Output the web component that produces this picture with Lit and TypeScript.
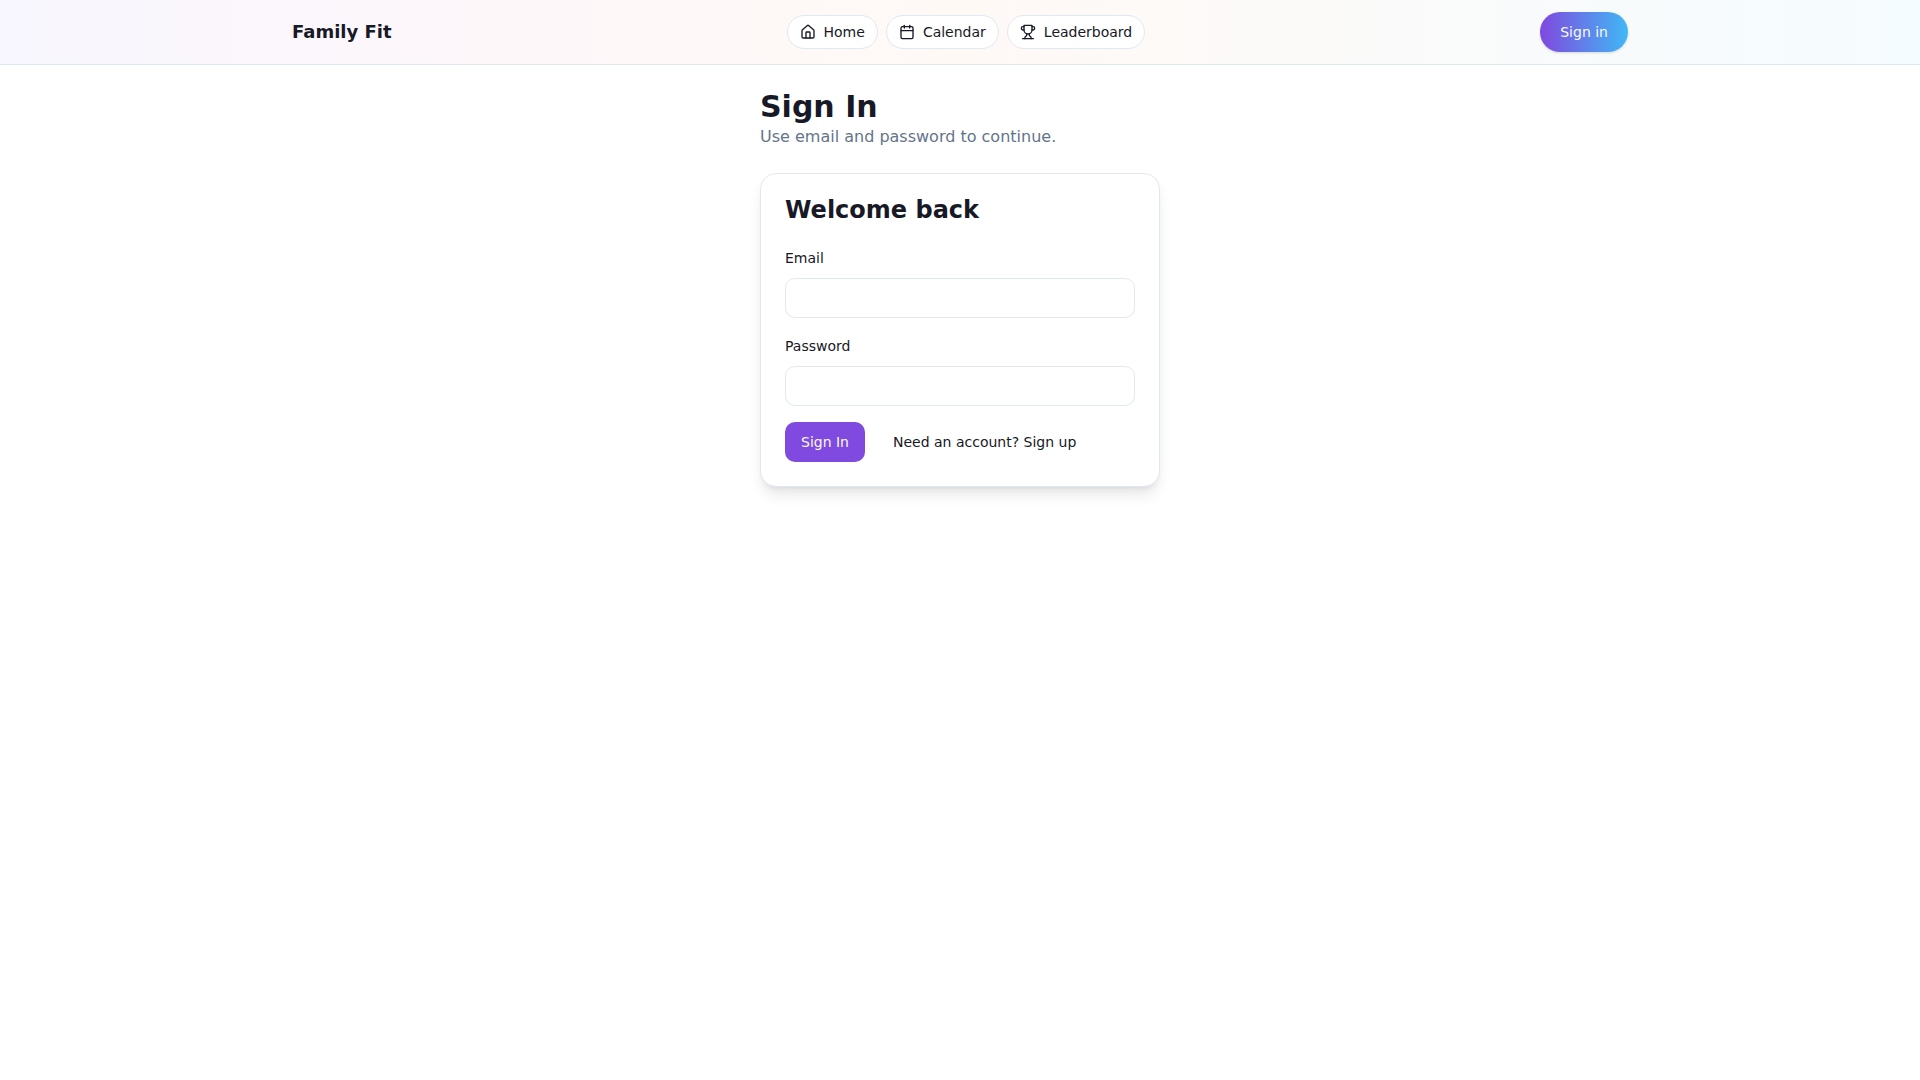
import { LitElement, html, css, svg } from "lit";
import { customElement } from "lit/decorators.js";

const icons = {
  home: svg`<path d="M15 21v-8a1 1 0 0 0-1-1h-4a1 1 0 0 0-1 1v8"/><path d="M3 10a2 2 0 0 1 .709-1.528l7-5.999a2 2 0 0 1 2.582 0l7 5.999A2 2 0 0 1 21 10v9a2 2 0 0 1-2 2H5a2 2 0 0 1-2-2z"/>`,
  calendar: svg`<path d="M8 2v4"/><path d="M16 2v4"/><rect width="18" height="18" x="3" y="4" rx="2"/><path d="M3 10h18"/>`,
  trophy: svg`<path d="M6 9H4.500a2.500 2.500 0 0 1 0-5H6"/><path d="M18 9h1.500a2.500 2.500 0 0 0 0-5H18"/><path d="M4 22h16"/><path d="M10 14.660V17c0 .550-.470.980-.970 1.210C7.850 18.750 7 20.240 7 22"/><path d="M14 14.660V17c0 .550.470.980.970 1.210C16.150 18.750 17 20.240 17 22"/><path d="M18 2H6v7a6 6 0 0 0 12 0V2Z"/>`,
};

const links = [
  { label: "Home", href: "#home", icon: icons.home },
  { label: "Calendar", href: "#calendar", icon: icons.calendar },
  { label: "Leaderboard", href: "#leaderboard", icon: icons.trophy },
];

@customElement("app-header")
class AppHeader extends LitElement {
  static styles = css`
    :host {
      display: block;
      border-bottom: 1px solid #dfe7f1;
      background: linear-gradient(to right, #f8f6fe, #fdf7fa 25%, #fff9f6 50%, #f5fcff);
    }
    .bar {
      box-sizing: border-box;
      max-width: 1400px;
      margin: 0 auto;
      padding: 12px 32px;
      display: flex;
      align-items: center;
      justify-content: space-between;
    }
    a {
      color: inherit;
      text-decoration: none;
    }
    .brand {
      font-size: 18px;
      line-height: 28px;
      font-weight: 700;
    }
    .nav {
      display: flex;
      gap: 8px;
    }
    .pill {
      display: flex;
      align-items: center;
      gap: 8px;
      padding: 6px 12px;
      border: 1px solid #e1e8f2;
      border-radius: 999px;
      background: #fff;
      font-size: 14px;
      line-height: 20px;
    }
    .icon {
      width: 16px;
      height: 16px;
      fill: none;
      stroke: currentColor;
      stroke-width: 2;
      stroke-linecap: round;
      stroke-linejoin: round;
    }
    .cta {
      padding: 10px 20px;
      border-radius: 999px;
      background: linear-gradient(to right, #8049df, #40b8f5);
      box-shadow: 0 1px 2px rgb(0 0 0 / 0.05), 0 1px 3px rgb(0 0 0 / 0.1);
      color: #f8fafc;
      font-size: 14px;
      line-height: 20px;
    }
  `;

  render() {
    return html`
      <header class="bar">
        <a class="brand" href="#home">Family Fit</a>
        <nav class="nav">
          ${links.map(
            (l) => html`<a class="pill" href=${l.href}
              ><svg class="icon" viewBox="0 0 24 24" aria-hidden="true">${l.icon}</svg
              ><span>${l.label}</span></a
            >`
          )}
        </nav>
        <a class="cta" href="#sign-in">Sign in</a>
      </header>
    `;
  }
}

@customElement("sign-in-card")
class SignInCard extends LitElement {
  static styles = css`
    :host {
      display: block;
      padding: 24px;
      border: 1px solid #e1e8f2;
      border-radius: 16px;
      background: #fff;
      box-shadow: 0 10px 15px -3px rgb(0 0 0 / 0.1), 0 4px 6px -4px rgb(0 0 0 / 0.1);
    }
    .title {
      margin: 0 0 24px;
      font-size: 24px;
      line-height: 24px;
      font-weight: 700;
    }
    .form {
      display: grid;
      gap: 16px;
    }
    .field {
      display: grid;
      gap: 8px;
    }
    .label {
      font-size: 14px;
      line-height: 24px;
    }
    .input {
      box-sizing: border-box;
      width: 100%;
      height: 40px;
      padding: 8px 12px;
      border: 1px solid #e1e8f2;
      border-radius: 10px;
      background: #fff;
      color: inherit;
      font: inherit;
      font-size: 14px;
    }
    .actions {
      display: flex;
      align-items: center;
      gap: 12px;
    }
    .button {
      padding: 10px 16px;
      border: 0;
      border-radius: 10px;
      background: transparent;
      color: inherit;
      font-family: inherit;
      font-size: 14px;
      line-height: 20px;
      cursor: pointer;
    }
    .primary {
      background: #8049df;
      color: #f8fafc;
    }
  `;

  render() {
    return html`
      <h2 class="title">Welcome back</h2>
      <form class="form" @submit=${(e: Event) => e.preventDefault()}>
        <div class="field">
          <label class="label" for="email">Email</label>
          <input class="input" id="email" type="email" autocomplete="email" />
        </div>
        <div class="field">
          <label class="label" for="password">Password</label>
          <input class="input" id="password" type="password" autocomplete="current-password" />
        </div>
        <div class="actions">
          <button class="button primary" type="submit">Sign In</button>
          <button class="button" type="button">Need an account? Sign up</button>
        </div>
      </form>
    `;
  }
}

@customElement("app-root")
class AppRoot extends LitElement {
  static styles = css`
    :host {
      display: block;
      min-height: 100vh;
      background: #fff;
      color: #171926;
      font-family: "DejaVu Sans", sans-serif;
      font-size: 16px;
      line-height: 24px;
    }
    .main {
      box-sizing: border-box;
      max-width: 448px;
      margin: 0 auto;
      padding: 24px;
    }
    .heading {
      margin: 0;
      font-size: 30px;
      line-height: 36px;
      font-weight: 700;
    }
    .lead {
      margin: 0 0 24px;
      color: #64748b;
    }
  `;

  render() {
    return html`
      <app-header></app-header>
      <main class="main">
        <h1 class="heading">Sign In</h1>
        <p class="lead">Use email and password to continue.</p>
        <sign-in-card></sign-in-card>
      </main>
    `;
  }
}
